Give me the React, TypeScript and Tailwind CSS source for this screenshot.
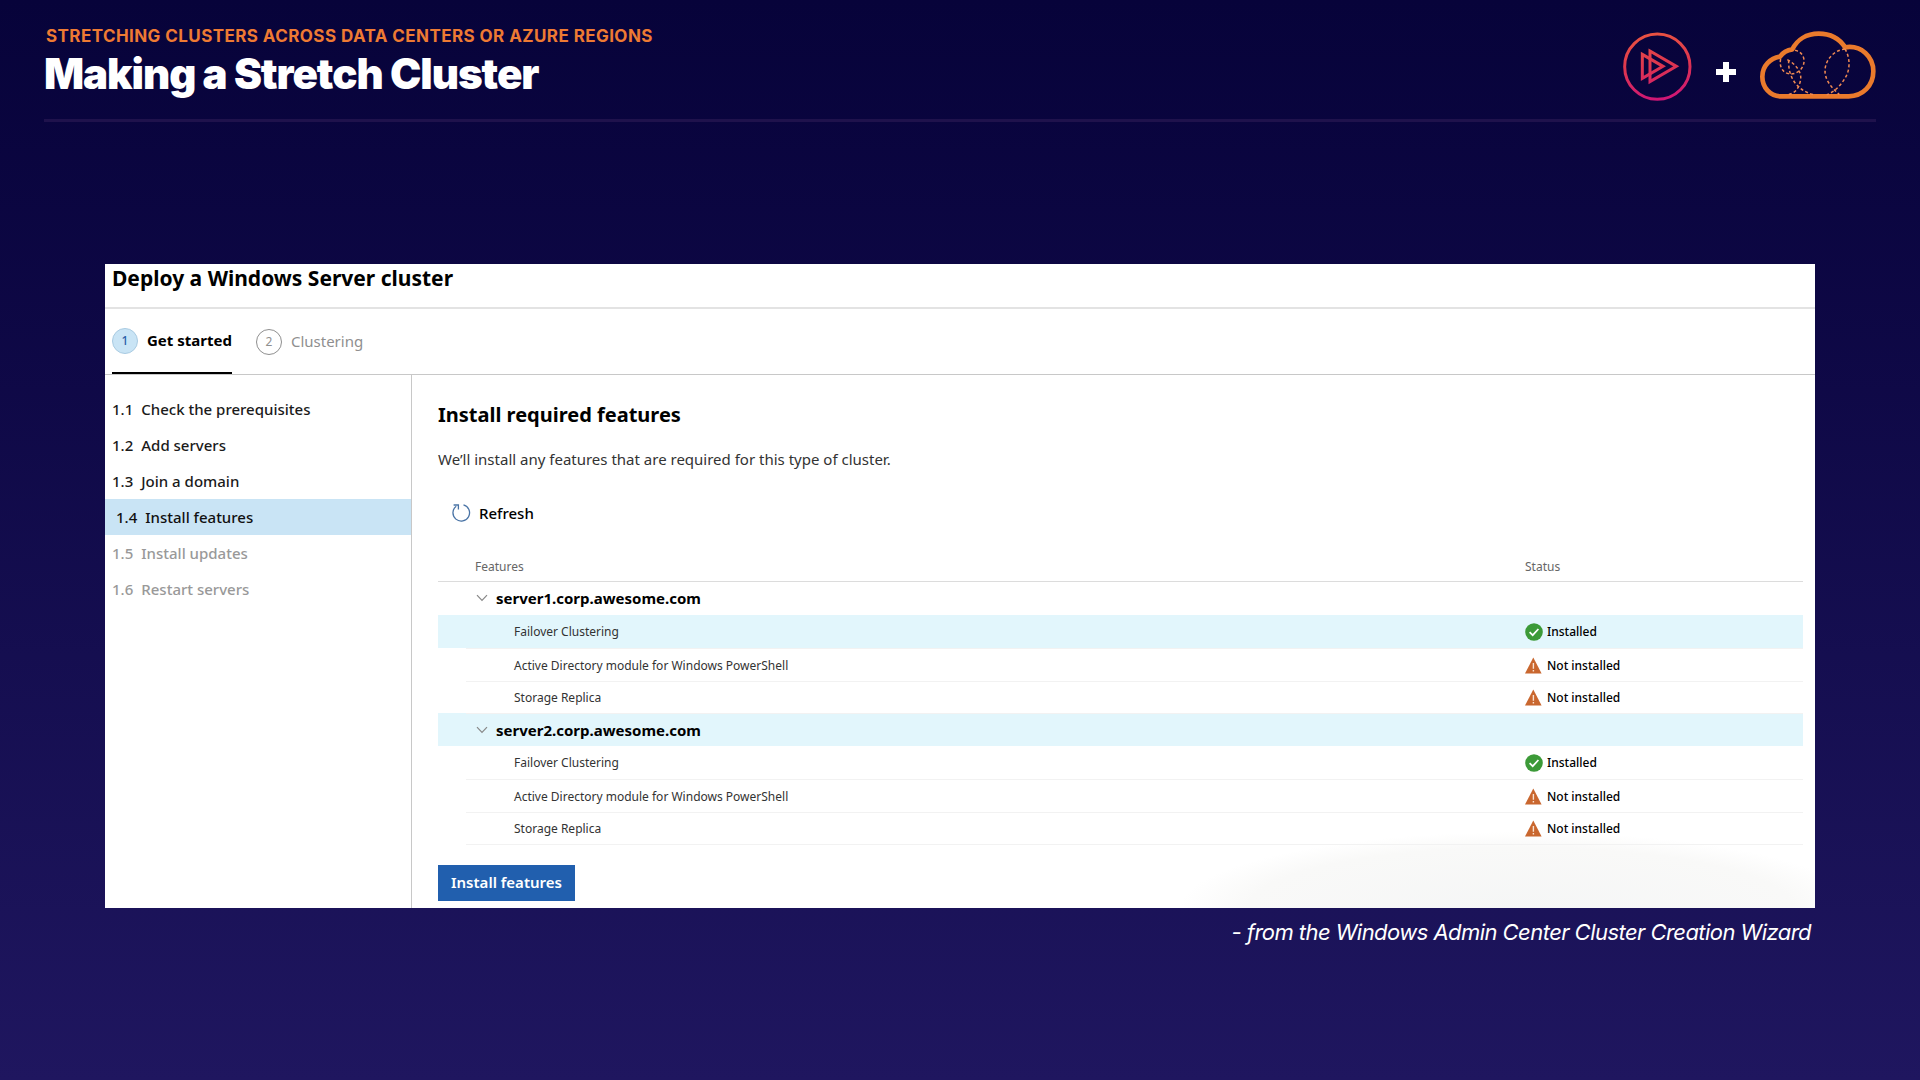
import React from "react";

type Feature = { name: string; installed: boolean; active?: boolean };
type Server = { host: string; active?: boolean; features: Feature[] };

const servers: Server[] = [
  {
    host: "server1.corp.awesome.com",
    features: [
      { name: "Failover Clustering", installed: true, active: true },
      { name: "Active Directory module for Windows PowerShell", installed: false },
      { name: "Storage Replica", installed: false },
    ],
  },
  {
    host: "server2.corp.awesome.com",
    active: true,
    features: [
      { name: "Failover Clustering", installed: true },
      { name: "Active Directory module for Windows PowerShell", installed: false },
      { name: "Storage Replica", installed: false },
    ],
  },
];

const steps = [
  { id: "1.1", label: "Check the prerequisites", state: "done" },
  { id: "1.2", label: "Add servers", state: "done" },
  { id: "1.3", label: "Join a domain", state: "done" },
  { id: "1.4", label: "Install features", state: "current" },
  { id: "1.5", label: "Install updates", state: "todo" },
  { id: "1.6", label: "Restart servers", state: "todo" },
];

const stepStyles: Record<string, string> = {
  done: "px-[7px] text-[#1b1b1b]",
  current: "bg-[#c9e4f5] px-[11px] text-[#111111]",
  todo: "px-[7px] text-[#999999]",
};

function PlayLogo() {
  return (
    <svg width="70" height="70" viewBox="0 0 210 210" fill="none" aria-hidden="true">
      <defs>
        <linearGradient id="play" gradientUnits="userSpaceOnUse" x1="80" y1="0" x2="110" y2="210">
          <stop offset="0" stopColor="#ea5540" />
          <stop offset="0.5" stopColor="#dd3550" />
          <stop offset="1" stopColor="#cf1577" />
        </linearGradient>
      </defs>
      <g stroke="url(#play)" strokeWidth="9">
        <circle cx="106" cy="107" r="98" />
        <path d="M84 60 L163 106 L84 152 Z" />
        <path d="M61 70 L123 106 L61 142 Z" />
      </g>
    </svg>
  );
}

function PlusMark() {
  return (
    <svg width="20" height="20" viewBox="0 0 20 20" className="mt-3" aria-hidden="true">
      <path d="M7 0h6v7h7v6h-7v7H7v-7H0V7h7z" fill="#ffffff" />
    </svg>
  );
}

function CloudLogo() {
  return (
    <svg width="116" height="70" viewBox="484 62 348 210" fill="none" stroke="#ea7a2c" aria-hidden="true">
      <path
        strokeWidth="14"
        strokeLinejoin="round"
        d="M548 258 C513 258 491 230 491 199 C491 166 515 144 544 139 C552 127 565 119 581 117 C595 88 624 70 660 70 C695 70 723 86 739 111 C789 103 824 140 824 183 C824 226 792 258 750 258 Z"
      />
      <g strokeWidth="4.5" strokeDasharray="9 7" stroke="#f08a52">
        <path d="M546 146 C540 172 556 192 578 191 C603 189 618 168 616 148 C613 128 598 120 581 119" />
        <path d="M566 148 C590 160 612 186 605 212 C600 236 588 250 566 253" />
        <path d="M570 150 C568 196 590 238 644 253" />
        <path d="M739 116 C703 120 678 152 679 184 C681 214 700 232 722 253" />
        <path d="M739 116 C756 144 754 180 740 202 C726 226 706 246 684 253" />
      </g>
    </svg>
  );
}

function RefreshIcon() {
  return (
    <svg width="20" height="20" viewBox="0 0 20 20" fill="none" stroke="#4a74a6" strokeWidth="1.3" aria-hidden="true">
      <path d="M12.5 1.8 A8.3 8.3 0 1 1 5.2 3.2" />
      <path d="M2.6 2 H7.4 V6.6" />
    </svg>
  );
}

function Chevron() {
  return (
    <svg width="12" height="8" viewBox="0 0 12 8" fill="none" stroke="#888888" strokeWidth="1.2" aria-hidden="true">
      <path d="M1 1.2 L6 6.4 L11 1.2" />
    </svg>
  );
}

function InstalledIcon() {
  return (
    <svg width="18" height="18" viewBox="0 0 18 18" aria-hidden="true">
      <circle cx="9" cy="9" r="8.8" fill="#3c9a38" />
      <path d="M4.6 9.2 L7.7 12.2 L13.4 6" fill="none" stroke="#ffffff" strokeWidth="1.7" />
    </svg>
  );
}

function WarningIcon() {
  return (
    <svg width="18" height="18" viewBox="0 0 18 18" aria-hidden="true">
      <path d="M8.3 0.5 L16.6 16.5 H0 Z" fill="#c9672f" />
      <path d="M8.4 6 V11.7 M8.4 12.9 V14.5" stroke="#fbe3d2" strokeWidth="1.4" />
    </svg>
  );
}

function FeatureTable() {
  return (
    <table className="mt-5 w-full table-fixed border-collapse text-left text-[12px] text-[#333333]">
      <colgroup>
        <col className="w-7" />
        <col />
        <col className="w-[286px]" />
      </colgroup>
      <thead>
        <tr className="h-9 border-b border-[#dcdcdc] text-[#666666]">
          <td />
          <th scope="col" className="pt-2 pl-[9px] font-normal">Features</th>
          <th scope="col" className="pt-2 pl-2 font-normal">Status</th>
        </tr>
      </thead>
      {servers.map((server) => (
        <tbody key={server.host}>
          <tr className={server.active ? "h-[33px] bg-[#e2f6fc]" : "h-[34px]"}>
            <td />
            <th scope="rowgroup" colSpan={2} className="pl-1.5">
              <button type="button" aria-expanded="true" className="flex items-center gap-2 px-1 text-[15px] leading-5 font-bold text-black">
                <Chevron />
                {server.host}
              </button>
            </th>
          </tr>
          {server.features.map((f) => (
            <tr key={f.name} className={f.active ? "h-[33px] bg-[#e2f6fc]" : "h-[33px] last:h-8"}>
              <td />
              <td className="border-b border-[#f2f2f2] pt-0.5 pl-12">{f.name}</td>
              <td className="border-b border-[#f2f2f2] pt-0.5 pl-2">
                <span className="flex items-center gap-1 font-medium text-black">
                  {f.installed ? <InstalledIcon /> : <WarningIcon />}
                  {f.installed ? "Installed" : "Not installed"}
                </span>
              </td>
            </tr>
          ))}
        </tbody>
      ))}
    </table>
  );
}

function Wizard() {
  return (
    <section className="bg-white font-['Noto_Sans','Open_Sans',sans-serif] text-black">
      <h2 className="border-b-2 border-[#e3e3e3] px-[7px] pb-[15px] text-[21px] leading-7 font-bold">
        Deploy a Windows Server cluster
      </h2>
      <nav aria-label="Stages" className="flex gap-6 border-b border-[#c8c8c8] px-[7px]">
        <a href="#get-started" aria-current="step" className="flex h-[65px] items-center gap-[9px] border-b-2 border-black text-[15px] font-bold">
          <span className="flex size-[26px] items-center justify-center rounded-full border border-[#a9cbe2] bg-[#c9e4f5] text-[12px] font-medium text-[#2c5fa8]">1</span>
          Get started
        </a>
        <a href="#clustering" className="flex h-[65px] items-center gap-[9px] text-[15px] text-[#8f8f8f]">
          <span className="flex size-[26px] items-center justify-center rounded-full border border-[#8f8f8f] text-[12px]">2</span>
          Clustering
        </a>
      </nav>
      <div className="flex">
        <aside className="w-[307px] shrink-0 border-r border-[#c8c8c8] pt-4">
          <ol>
            {steps.map((s) => (
              <li key={s.id} className={stepStyles[s.state]}>
                <a href={`#step-${s.id}`} className="flex h-9 items-center gap-2 text-[15px] font-medium">
                  <span>{s.id}</span>
                  <span>{s.label}</span>
                </a>
              </li>
            ))}
          </ol>
        </aside>
        <div className="min-w-0 flex-1 bg-[radial-gradient(ellipse_340px_76px_at_79%_100%,#f5f6f6_0%,#f9f9f8_80%,#f9f9f800_100%)] pr-3 pb-[7px] pl-[26px]">
          <h3 className="pt-[26px] text-[20px] leading-7 font-bold">Install required features</h3>
          <p className="pt-[18px] text-[15px] leading-6 text-[#333333]">
            We’ll install any features that are required for this type of cluster.
          </p>
          <button type="button" className="mt-[30px] ml-[13px] flex items-center gap-2 text-[15px] leading-6 font-medium">
            <RefreshIcon />
            Refresh
          </button>
          <FeatureTable />
          <button type="button" className="mt-5 h-9 bg-[#215fae] px-[13px] text-[15px] font-semibold text-white">
            Install features
          </button>
        </div>
      </div>
    </section>
  );
}

export default function App() {
  return (
    <div className="min-h-screen bg-gradient-to-b from-[#07033a] to-[#1f165f] px-11 font-['Inter',sans-serif] text-white">
      <header className="flex h-[122px] items-start justify-between border-b-3 border-[#1f124c]">
        <div className="pt-6">
          <p className="pl-0.5 text-[17px] leading-6 font-bold tracking-wide text-[#ee7a33] uppercase">
            Stretching clusters across data centers or Azure regions
          </p>
          <h1 className="text-[42px] leading-[52px] font-black tracking-tight">Making a Stretch Cluster</h1>
        </div>
        <div className="flex items-center gap-6 pt-[31px]">
          <PlayLogo />
          <PlusMark />
          <CloudLogo />
        </div>
      </header>
      <main className="px-[61px] pt-[142px]">
        <Wizard />
        <p className="pt-2 pr-1 text-right text-[22px] leading-8 italic tracking-tight">
          - from the Windows Admin Center Cluster Creation Wizard
        </p>
      </main>
    </div>
  );
}
